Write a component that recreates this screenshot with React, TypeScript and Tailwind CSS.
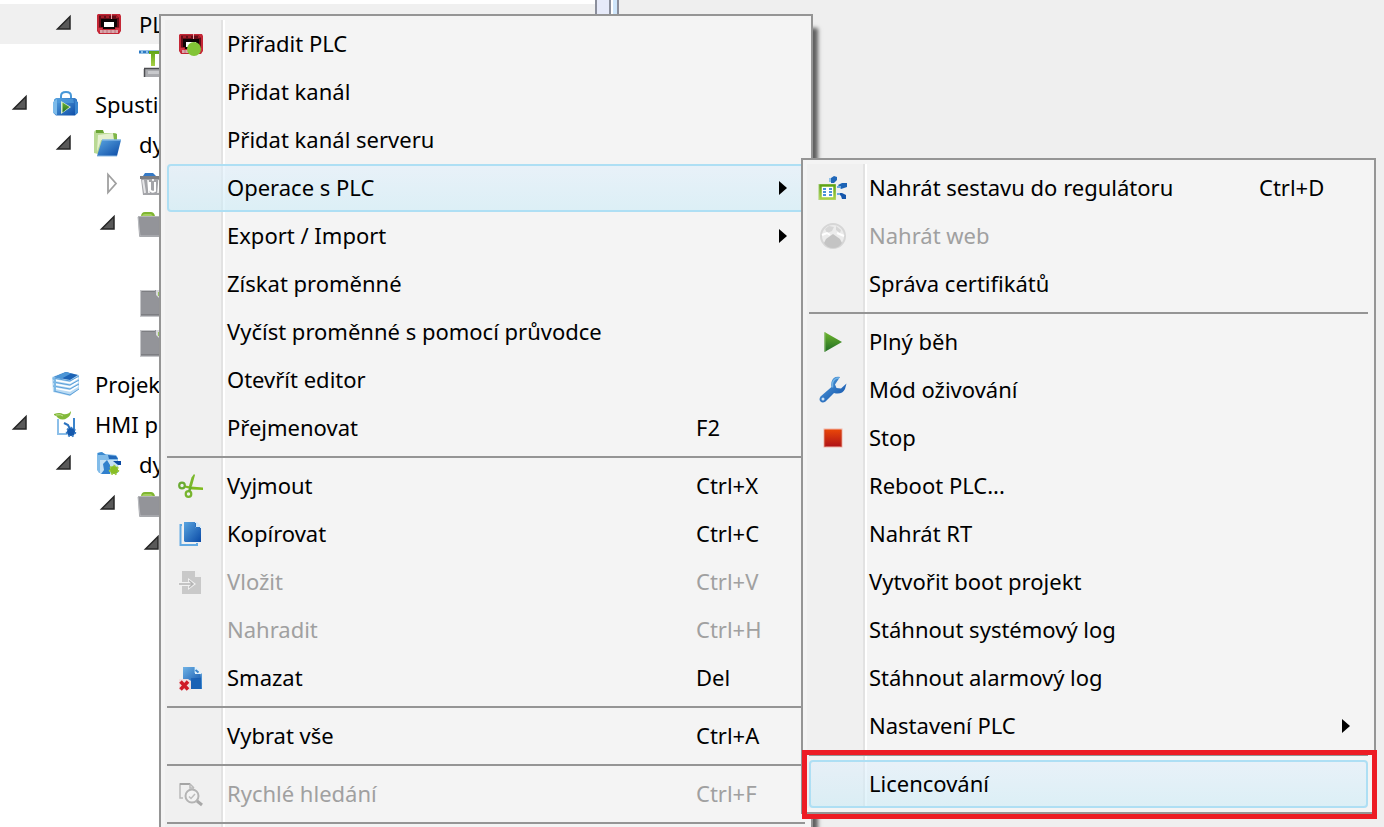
import type { ReactNode } from "react";

function Gradients() {
  return (
    <svg className="absolute size-0" aria-hidden="true">
      <defs>
        <linearGradient id="blue" x1="0" y1="0" x2="1" y2="1">
          <stop offset="0" stopColor="#5aa5e0" />
          <stop offset="1" stopColor="#0a4aa6" />
        </linearGradient>
        <linearGradient id="sky" x1="0" y1="0" x2="1" y2="1">
          <stop offset="0" stopColor="#a4d4f2" />
          <stop offset="1" stopColor="#2f7cc8" />
        </linearGradient>
        <linearGradient id="lime" x1="0" y1="0" x2="0" y2="1">
          <stop offset="0" stopColor="#5fa417" />
          <stop offset="1" stopColor="#a9d046" />
        </linearGradient>
        <linearGradient id="play" x1="0" y1="0" x2="0" y2="1">
          <stop offset="0" stopColor="#6db52c" />
          <stop offset="1" stopColor="#1f6b25" />
        </linearGradient>
        <linearGradient id="stop" x1="0" y1="0" x2="0" y2="1">
          <stop offset="0" stopColor="#ea4708" />
          <stop offset="1" stopColor="#b01217" />
        </linearGradient>
      </defs>
    </svg>
  );
}

function Glyph({ children }: { children: ReactNode }) {
  return (
    <svg viewBox="0 0 28 28" className="size-7 shrink-0 overflow-visible" fill="none" aria-hidden="true">
      {children}
    </svg>
  );
}

const plcBody = (
  <>
    <path d="M2 4h22l1 2v15l-2 3H3l-2-3V5z" fill="#c42736" />
    <path d="M4 5.500h17v2h2v10H3v-12z" fill="#640d17" />
    <path d="M5 6h3v2H5zM10 6h3v2h-3zM20 6h2v2h-2z" fill="#a51b28" />
    <path d="M15 4h1v5h-1z" fill="#f0a9ae" />
    <path d="M5 9h16v8h-2v2H7v-2H5z" fill="#0d0406" />
    <path d="M8 12h10v5H8z" fill="#fff" />
    <path d="M2 18h4v2h14v-2h4v3H2z" fill="#d13444" />
    <path d="M4 20h18v3H4z" fill="#dba5aa" />
    <path d="M7 20v3M11 20v3M15 20v3M19 20v3" stroke="#b8757d" />
  </>
);

const PlcIcon = () => <Glyph>{plcBody}</Glyph>;

const PlcAssignIcon = () => (
  <Glyph>
    <g transform="translate(1 0)">{plcBody}</g>
    <circle cx="17" cy="19" r="7" fill="#82c436" />
  </Glyph>
);

const ConnectorIcon = () => (
  <Glyph>
    <path d="M-1 2h24" stroke="#2b79c4" strokeWidth="3" />
    <path d="M1 2h2M6 2h2" stroke="#8fc1ea" strokeWidth="3" />
    <path d="M9 1h10v3h-4v12h-4V4H9z" fill="url(#lime)" />
    <path d="M4 18h20v9H4z" fill="#a9aaae" />
    <path d="M4 18.500h20M4.500 19v8" stroke="#4c4d50" strokeWidth="1.500" />
    <path d="M8 21h14v3H8z" fill="#c8c9cc" />
  </Glyph>
);

const BagIcon = () => (
  <Glyph>
    <path d="M9 9V6q0-4 5-4t5 4v3" stroke="#4797d8" strokeWidth="2" />
    <path d="M4 8h19l2 1.500v14L23 25.500H4l-2-2v-14z" fill="url(#blue)" />
    <path d="M1 12l4-3v16l-4-2z" fill="#7dbbea" />
    <path d="M23 10l3 2v11l-3 2z" fill="#3b86cf" />
    <path d="M6 9h15l1 4H5z" fill="#4f9bdc" opacity=".7" />
    <path d="M9 11l10 6-10 7z" fill="#d5ecd0" />
    <path d="M10.500 12.500l7 4.500-7 5.500z" fill="url(#play)" />
  </Glyph>
);

const FolderOpenIcon = () => (
  <Glyph>
    <path d="M-2 3Q-2 0 1 0h5l2 3h11q2 0 2 3v4L2 24l-4-1z" fill="#b9d993" />
    <path d="M0 0h7l1 3H0z" fill="#6aa534" />
    <path d="M2 5l16-2 2 7H5L1 22z" fill="#e5f0cf" />
    <path d="M17 3l4 1v6h-3z" fill="#7fb648" />
    <path d="M6 10h19l-4 16H1z" fill="url(#blue)" />
    <path d="M6 10h19" stroke="#7fb5e3" strokeWidth="1.500" />
    <path d="M1 26h20" stroke="#8dbbe4" />
  </Glyph>
);

const BinIcon = () => (
  <Glyph>
    <path d="M3 6l2-3h8l3 3z" fill="#3479c6" />
    <path d="M0 6h24v3H0z" fill="#7d7e82" />
    <path d="M1 9h22l-2 16H3z" fill="#a3a4a8" />
    <path d="M3 10l2 13" stroke="#e5e5e7" strokeWidth="2" />
    <path d="M8 10l1 13M12 10h2M19 10l-1 13" stroke="#fff" strokeWidth="1.500" />
    <path d="M10 12v8q2 3 5 1v-9" stroke="#fff" strokeWidth="2" />
  </Glyph>
);

const FolderGrayIcon = () => (
  <Glyph>
    <path d="M1 7q0-5 4-5h6q3 0 4 4z" fill="#7fb532" />
    <path d="M2 7q0-3 3-3h6l3 3z" fill="#a6cf60" />
    <path d="M-2 6h26v21H0Q-1 27-1 25z" fill="#939499" />
    <path d="M-2 6.500h26" stroke="#b4b5b9" />
    <path d="M-2 7L0 26h24" stroke="#b9bbbf" />
  </Glyph>
);

const TaggedFileIcon = () => (
  <Glyph>
    <path d="M0 0h24v27H0z" fill="#939499" />
    <path d="M.5 1v26M0 .5h15" stroke="#c5c6c9" />
    <path d="M1 26.500h23" stroke="#c5c6c9" />
    <path d="M1 24.500h23M2 1.500h13" stroke="#7d7e82" />
    <path d="M16 0h8v9h-4l-4-4z" fill="#d9dadc" />
    <path d="M18 2h5v4h-5z" fill="#9ac464" />
  </Glyph>
);

const BooksIcon = () => (
  <Glyph>
    <path d="M0 7l13-5 14 3v14l-9 7-17-4z" fill="#b9daf3" />
    <path d="M2 7l12-5 12 3-8 5z" fill="#1d63b5" />
    <path d="M2 7l12-5 5 1.500L9 9z" fill="#4d96d6" />
    <path d="M2 10l16 3 8-5M2 14l16 3 8-5M2 18l16 3 8-5" stroke="#fff" strokeWidth="1.500" />
    <path d="M1 8l17 3 9-5M1 12l17 3 9-5M1 16l17 3 9-5M2 21l16 4 9-6" stroke="#5b9fd9" />
    <path d="M1 8l2 2v11" stroke="#7db9e6" strokeWidth="2" />
  </Glyph>
);

const HmiIcon = () => (
  <Glyph>
    <path d="M6 7h16v18H6z" fill="#fff" />
    <path d="M6 9v15h9" stroke="#8cbfe9" strokeWidth="2" />
    <path d="M22 8v14" stroke="#3b84cc" strokeWidth="2" />
    <path d="M2 4q6-2 9 0 5 1 8-3 0 5-4 7-4 3-9 0-1-2-4-3z" fill="#82b93a" />
    <path d="M4 5q5-1 7 1" stroke="#c2df92" />
    <path d="M12 13l4 2 2 4" stroke="#2b73c0" strokeWidth="2" />
    <circle cx="19" cy="22" r="4" fill="#1559ad" />
    <circle cx="19" cy="22" r="4.500" stroke="#3b80c8" strokeWidth="1.500" strokeDasharray="2 2" />
  </Glyph>
);

const FolderProjectIcon = () => (
  <Glyph>
    <path d="M1 3l4-1 4 2 11 1 2 3v15H3l-2-3z" fill="#82bce9" />
    <path d="M2 3l4-1 4 3H2z" fill="#3c8ad0" />
    <path d="M4 10h17l2 4-3 10H4z" fill="#c4e0f5" />
    <path d="M12 5l8 1 2 3h-9z" fill="#2269ba" />
    <path d="M17 11h8v4h-3z" fill="#0c4aa3" />
    <path d="M7 14l4-4 3 5v9H5l3-4z" fill="#3180cd" />
    <circle cx="18" cy="20" r="4" fill="#89be25" />
    <circle cx="18" cy="20" r="4.500" stroke="#9ecb43" strokeWidth="1.500" strokeDasharray="2 2" />
  </Glyph>
);

const ScissorsIcon = () => (
  <Glyph>
    <path d="M14.500 5.500L17 2l1 1-3 11-2 2-1-2z" fill="#7bb82c" />
    <path d="M8 13.500l6 1 12 1v2.500l-11-.5-7-2z" fill="#7fbb1e" />
    <circle cx="5" cy="13.500" r="2.800" stroke="#6aab33" strokeWidth="2.200" />
    <circle cx="11.500" cy="22" r="2.800" stroke="#78b52e" strokeWidth="2.200" />
    <path d="M12 19.500l2-5" stroke="#6aab33" strokeWidth="2.500" />
  </Glyph>
);

const CopyIcon = () => (
  <Glyph>
    <path d="M5 5H3.500v20H20v-2" stroke="#63aae3" strokeWidth="2" />
    <path d="M7 2h11l6 6v14H8l-1-1z" fill="url(#blue)" />
    <path d="M18 2h2l4 4v2h-6z" fill="#d6e9f8" />
    <path d="M18.500 3v4.500H23" stroke="#2871c0" />
  </Glyph>
);

const PasteIcon = () => (
  <Glyph>
    <path d="M5 3h13l6 5v18H5z" fill="#c9c9c9" />
    <path d="M18 3h2l4 4v2h-6z" fill="#eee" />
    <path d="M1 14h10v-4l8 6-8 6v-4H1z" fill="#f2f2f2" />
    <path d="M2 16h13M12 12.500l4 3.500-4 3.500" stroke="#b5b5b5" strokeWidth="1.500" />
  </Glyph>
);

const DeleteIcon = () => (
  <Glyph>
    <path d="M6 3h12l7 7v15H6z" fill="url(#sky)" />
    <path d="M14 14h10v11H14z" fill="#1b62b5" />
    <path d="M6 3h11v6h6l1 5-12 3H6z" fill="url(#blue)" opacity=".7" />
    <path d="M18 3h2l4 4v3h-6z" fill="#e2f0fa" />
    <path d="M18.500 6l3 2.500" stroke="#3c83ca" strokeWidth="2" />
    <path d="M2 15h9l3 2v9H2z" fill="#f0dede" />
    <path d="M3.500 17.500l7.500 8M11 17.500l-7.500 8" stroke="#cf1a27" strokeWidth="3.500" />
  </Glyph>
);

const SearchIcon = () => (
  <Glyph>
    <path d="M6 18H3V4h10l4 4" stroke="#b9b9b9" strokeWidth="1.500" />
    <path d="M3 4h10" stroke="#a5a5a5" strokeWidth="2" />
    <path d="M13 4v4h4" stroke="#b9b9b9" strokeWidth="1.500" />
    <circle cx="15" cy="16" r="6.500" fill="#f3f3f3" stroke="#b4b4b4" strokeWidth="2" />
    <path d="M12 16.500l2 2 4-4.500" stroke="#bdbdbd" strokeWidth="1.500" />
    <path d="M20 21l5 4" stroke="#a8a8a8" strokeWidth="3" />
  </Glyph>
);

const UploadIcon = () => (
  <Glyph>
    <path d="M-1 10h18v16H-1z" fill="#c8dfad" />
    <path d="M1.500 11.500h14v13h-14z" fill="#fff" stroke="url(#lime)" strokeWidth="2.500" />
    <path d="M4 15h3M10 15h3M4 18h3M10 18h3M4 21h3M10 21h3" stroke="#4b91da" strokeWidth="2" />
    <path d="M12 9V4l3-2 3 1v3l-3 3z" fill="#2168b9" />
    <path d="M11 8V4" stroke="#8fc0ea" strokeWidth="2" />
    <path d="M19 11l4-2 5 0v4l-6 2z" fill="#1d63b5" />
    <path d="M19 19l4 0 4 2v4h-4l-1-3z" fill="#1556ab" />
    <path d="M18 13h4M18 20h3" stroke="#69a9e0" strokeWidth="2" />
  </Glyph>
);

const GlobeIcon = () => (
  <Glyph>
    <circle cx="14" cy="14" r="12" fill="#ececec" stroke="#d6d6d6" strokeWidth="2" />
    <path d="M6 7l4-3 5 1-2 4-5 2zM17 4l5 4-1 3-4-3z" fill="#d6d6d6" />
    <path d="M7 17l7-5 7 5 2 4q-3 5-9 5t-9-5z" fill="#c4c4c4" />
    <path d="M3 13l5-2 3 2M18 11l7 3" stroke="#fff" strokeWidth="2" />
  </Glyph>
);

const PlayIcon = () => (
  <Glyph>
    <path d="M5.500 4L23 14 5.500 24z" fill="url(#play)" />
    <path d="M6 4.500v19" stroke="#82b866" />
  </Glyph>
);

const WrenchIcon = () => (
  <Glyph>
    <path
      d="M21 1q-7-1-8.500 5-.5 3 0 5L1.500 20.500q-2 3 0 5t5 0L15 17q8 2 11-4l1.500-5.500-5.500 5-4.500-.5-1.500-3.500z"
      fill="url(#blue)"
    />
    <path d="M20 2q-5 0-6.500 5v4.500" stroke="#72b4e6" strokeWidth="1.500" />
    <circle cx="4" cy="23" r="1.500" fill="#cfe3f6" />
  </Glyph>
);

const StopIcon = () => (
  <Glyph>
    <path d="M4.500 4.500h19v19h-19z" fill="#f0b5a8" />
    <path d="M5.500 5.500h17v17h-17z" fill="url(#stop)" />
    <path d="M6 6v17M22 6v17" stroke="#c63a20" opacity=".6" />
  </Glyph>
);

function Expander({ open }: { open?: boolean }) {
  return (
    <svg viewBox="0 0 16 20" className="h-5 w-4 shrink-0 overflow-visible" fill="none" aria-hidden="true">
      {open === true && (
        <path d="M1.500 15h12.500V2.500z" fill="#595959" stroke="#262626" strokeWidth="1.500" />
      )}
      {open === false && <path d="M8 .5l8 9-8 9z" fill="#fff" stroke="#a0a0a0" strokeWidth="1.800" />}
    </svg>
  );
}

type Node = {
  indent: string;
  open?: boolean;
  icon?: ReactNode;
  label?: string;
  selected?: boolean;
};

const tree: Node[] = [
  { indent: "pl-14", open: true, icon: <PlcIcon />, label: "PL", selected: true },
  { indent: "pl-25", icon: <ConnectorIcon /> },
  { indent: "pl-3", open: true, icon: <BagIcon />, label: "Spusti" },
  { indent: "pl-14", open: true, icon: <FolderOpenIcon />, label: "dy" },
  { indent: "pl-25", open: false, icon: <BinIcon /> },
  { indent: "pl-25", open: true, icon: <FolderGrayIcon /> },
  { indent: "pl-36" },
  { indent: "pl-25", icon: <TaggedFileIcon /> },
  { indent: "pl-25", icon: <TaggedFileIcon /> },
  { indent: "pl-3", icon: <BooksIcon />, label: "Projek" },
  { indent: "pl-3", open: true, icon: <HmiIcon />, label: "HMI p" },
  { indent: "pl-14", open: true, icon: <FolderProjectIcon />, label: "dy" },
  { indent: "pl-25", open: true, icon: <FolderGrayIcon /> },
  { indent: "pl-36", open: true },
];

function TreeRow({ indent, open, icon, label, selected }: Node) {
  return (
    <li
      role="treeitem"
      aria-expanded={open}
      aria-selected={!!selected}
      className={`flex h-10 items-center ${indent} ${selected ? "bg-[#f0f0f0]" : ""}`}
    >
      <Expander open={open} />
      <span className="ml-6 flex size-7">{icon}</span>
      <span className="ml-[15px] whitespace-nowrap">{label}</span>
    </li>
  );
}

type Item =
  | "separator"
  | {
      label: string;
      icon?: ReactNode;
      shortcut?: string;
      submenu?: boolean;
      disabled?: boolean;
      active?: boolean;
      marked?: boolean;
    };

const mainItems: Item[] = [
  { label: "Přiřadit PLC", icon: <PlcAssignIcon /> },
  { label: "Přidat kanál" },
  { label: "Přidat kanál serveru" },
  { label: "Operace s PLC", submenu: true, active: true },
  { label: "Export / Import", submenu: true },
  { label: "Získat proměnné" },
  { label: "Vyčíst proměnné s pomocí průvodce" },
  { label: "Otevřít editor" },
  { label: "Přejmenovat", shortcut: "F2" },
  "separator",
  { label: "Vyjmout", icon: <ScissorsIcon />, shortcut: "Ctrl+X" },
  { label: "Kopírovat", icon: <CopyIcon />, shortcut: "Ctrl+C" },
  { label: "Vložit", icon: <PasteIcon />, shortcut: "Ctrl+V", disabled: true },
  { label: "Nahradit", shortcut: "Ctrl+H", disabled: true },
  { label: "Smazat", icon: <DeleteIcon />, shortcut: "Del" },
  "separator",
  { label: "Vybrat vše", shortcut: "Ctrl+A" },
  "separator",
  { label: "Rychlé hledání", icon: <SearchIcon />, shortcut: "Ctrl+F", disabled: true },
  "separator",
];

const plcItems: Item[] = [
  { label: "Nahrát sestavu do regulátoru", icon: <UploadIcon />, shortcut: "Ctrl+D" },
  { label: "Nahrát web", icon: <GlobeIcon />, disabled: true },
  { label: "Správa certifikátů" },
  "separator",
  { label: "Plný běh", icon: <PlayIcon /> },
  { label: "Mód oživování", icon: <WrenchIcon /> },
  { label: "Stop", icon: <StopIcon /> },
  { label: "Reboot PLC..." },
  { label: "Nahrát RT" },
  { label: "Vytvořit boot projekt" },
  { label: "Stáhnout systémový log" },
  { label: "Stáhnout alarmový log" },
  { label: "Nastavení PLC", submenu: true },
  "separator",
  { label: "Licencování", active: true, marked: true },
];

function Menu({ items, label, className }: { items: Item[]; label: string; className: string }) {
  return (
    <div className={`absolute border-2 border-[#959595] bg-[#f4f4f4] py-1 ${className}`}>
      <ul
        role="menu"
        aria-label={label}
        className="bg-[linear-gradient(to_right,#f4f4f4_4px,#f0f0f0_4px,#f0f0f0_60px,#e2e2e2_60px,#e2e2e2_62px,#fff_62px,#fff_64px,#f4f4f4_64px)] px-1.5"
      >
        {items.map((item, i) =>
          item === "separator" ? (
            <li key={i} role="separator" className="py-1">
              <div className="h-0.5 bg-[#959595]" />
            </li>
          ) : (
            <li key={i} role="none" className="relative">
              <button
                type="button"
                role="menuitem"
                disabled={item.disabled}
                aria-haspopup={item.submenu ? "menu" : undefined}
                className={`flex h-12 w-full items-center rounded border-2 pl-2 text-left disabled:text-[#a0a0a0] ${
                  item.active
                    ? "border-[#aedff4] bg-linear-to-b from-[#e0effb]/60 to-[#ccecf7]/60"
                    : "border-transparent"
                }`}
              >
                <span className="flex size-7">{item.icon}</span>
                <span className="ml-[22px] flex-1 pb-0.5 whitespace-nowrap">{item.label}</span>
                {item.shortcut && <span className="w-[107px] pb-0.5">{item.shortcut}</span>}
                {item.submenu && (
                  <svg viewBox="0 0 8 14" className="mr-4 h-3.5 w-2" aria-hidden="true">
                    <path d="M0 0l8 7-8 7z" fill="#000" />
                  </svg>
                )}
              </button>
              {item.marked && (
                <div className="pointer-events-none absolute -top-2.5 -right-[9px] -bottom-[11px] -left-[7px] border-5 border-[#ed1c24]" />
              )}
            </li>
          ),
        )}
      </ul>
    </div>
  );
}

export default function App() {
  return (
    <main className="relative flex h-screen overflow-hidden bg-[#efefef] font-['Noto_Sans','Open_Sans',sans-serif] text-[22px] leading-8 text-black">
      <Gradients />
      <ul role="tree" aria-label="Projekt" className="w-[595px] shrink-0 bg-white pt-1">
        {tree.map((node, i) => (
          <TreeRow key={i} {...node} />
        ))}
      </ul>
      <div className="flex shrink-0">
        <div className="w-4 border-x-2 border-[#8b8f9c] bg-[#e6eaf9]" />
        <div className="w-2 border-r-2 border-l-2 border-r-[#8b8f9c] border-l-white bg-[#cfe6fb]" />
      </div>
      <Menu
        items={mainItems}
        label="Místní nabídka"
        className="top-3.5 left-[159px] w-[654px] shadow-[5px_14px_4px_rgba(0,0,0,0.6)]"
      />
      <Menu items={plcItems} label="Operace s PLC" className="top-[158px] left-[801px] w-[575px]" />
    </main>
  );
}
